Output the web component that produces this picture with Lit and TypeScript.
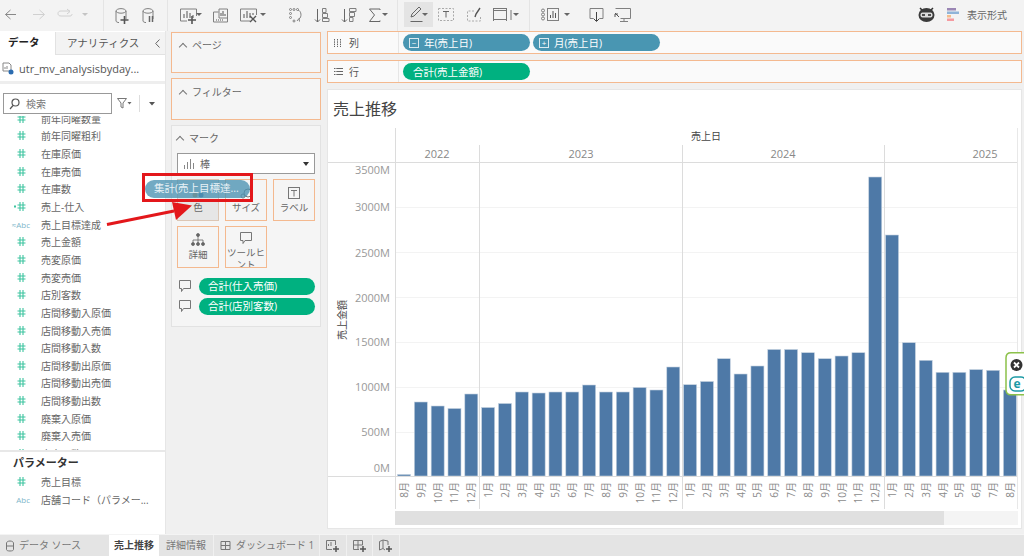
import { LitElement, html, css, svg } from 'lit'
import { customElement } from 'lit/decorators.js'

// top of each bar in page pixels, read off the reference
const BAR_TOPS = [
    474.5, 402, 406, 408.5, 394,
    407.5, 403.5, 392, 393, 392, 392, 385, 392, 392, 387.5, 390, 367,
    384.7, 381.5, 358.7, 374, 366, 349.5, 349.5, 352.7, 358.7, 356, 352.7, 177,
    235, 342.7, 360.3, 372.3, 372.3, 369.6, 370.3, 390,
]
const MONTHS = [8, 9, 10, 11, 12, 1, 2, 3, 4, 5, 6, 7, 8, 9, 10, 11, 12, 1, 2, 3, 4, 5, 6, 7, 8, 9, 10, 11, 12, 1, 2, 3, 4, 5, 6, 7, 8]
const TICKS: [string, number, number][] = [
    ['3500M', 170, 0], ['3000M', 207, 207], ['2500M', 253, 252], ['2000M', 298, 297],
    ['1500M', 342, 342], ['1000M', 387, 387], ['500M', 432, 432], ['0M', 468, 0],
]
const YEARS: [string, number][] = [['2022', 437], ['2023', 581], ['2024', 783], ['2025', 985]]

const FIELDS: [string, string][] = [
    ['前年同曜数量', 'n'], ['前年同曜粗利', 'n'], ['在庫原価', 'n'], ['在庫売価', 'n'], ['在庫数', 'n'],
    ['売上-仕入', 'cn'], ['売上目標達成', 'ca'], ['売上金額', 'n'], ['売変原価', 'n'], ['売変売価', 'n'],
    ['店別客数', 'n'], ['店間移動入原価', 'n'], ['店間移動入売価', 'n'], ['店間移動入数', 'n'],
    ['店間移動出原価', 'n'], ['店間移動出売価', 'n'], ['店間移動出数', 'n'], ['廃棄入原価', 'n'],
    ['廃棄入売価', 'n'], ['廃棄入数', 'n'],
]

// toolbar slots are drawn in page coordinates, the viewBox picks the slice
const slot = (x0: number, x1: number, body: unknown) => html`
    <svg class="slot" width=${x1 - x0} height="31" viewBox="${x0} 0 ${x1 - x0} 31"
        fill="none" stroke="#808080" stroke-width="1">${body}</svg>`
const caret = (x: number, y = 14, c = '#666') => svg`<path d="M${x} ${y}h6l-3 3z" fill=${c} stroke="none"/>`
const plus = (x: number, y: number) => svg`<path d="M${x - 4} ${y}h8M${x} ${y - 4}v8" stroke="#555" stroke-width="1.6"/>`
const can = (x: number) => svg`<path d="M${x + 10} 19V11c0-1.2-2.3-2.4-5-2.4S${x} 9.800 ${x} 11v10c0 .8 1.500 1.500 3 1.600M${x} 11c0 1.200 2.300 2.200 5 2.200s5-1 5-2.200"/>`

const bubble = (x: number, y: number, c = '#777') => svg`<path d="M${x + .5} ${y + .5}h11v8h-7l-2 3v-3h-2z" stroke=${c} fill="none"/>`

@customElement('sales-chart')
export class SalesChart extends LitElement {
    static styles = css`
        :host { display: block; height: 100%; }
        svg { display: block; width: 100%; height: 100%; font-family: "Open Sans", "Noto Sans CJK JP", sans-serif; }
    `

    protected override render() {
        return html`
            <svg viewBox="328 90 693 438">
                ${TICKS.filter(t => t[2]).map(t => svg`<line x1="395" x2="1017" y1=${t[2] + .5} y2=${t[2] + .5} stroke="#f3f3f3"/>`)}
                ${BAR_TOPS.map((top, i) => svg`
                    <rect x=${397.5 + i * 16.83} y=${top} width="13" height=${476 - top} fill="#4e79a7" stroke="#c5d2e0" stroke-width=".6"/>
                    <text transform="translate(${408 + i * 16.83} 482) rotate(-90)" text-anchor="end" font-size="10" fill="#8b8b8b">${MONTHS[i]}月</text>`)}
                <path d="M395.500 128V509M479.500 145V509M682.500 145V509M884.500 145V509" stroke="#dcdcdc"/>
                <path d="M1017.500 128V509" stroke="#e8e8e8"/>
                <path d="M328 162.500H1017M328 476.500H1017" stroke="#dcdcdc"/>
                <text x="706" y="140" text-anchor="middle" font-size="10" fill="#444">売上日</text>
                ${YEARS.map(y => svg`<text x=${y[1]} y="158" text-anchor="middle" font-size="11" fill="#888">${y[0]}</text>`)}
                ${TICKS.map(t => svg`<text x="390" y=${t[1] + 4} text-anchor="end" font-size="11" fill="#999">${t[0]}</text>`)}
                <text transform="translate(346 320) rotate(-90)" text-anchor="middle" font-size="10" fill="#444">売上金額</text>
                <rect x="395" y="511" width="623" height="14" fill="#f4f4f4"/>
                <rect x="395" y="511" width="549" height="14" fill="#e0e0e0"/>
            </svg>
        `
    }
}

@customElement('app-root')
export class AppRoot extends LitElement {
    static styles = css`
        :host {
            display: block;
            position: relative;
            width: 1024px;
            height: 556px;
            overflow: hidden;
            background: #f0f0f0;
            color: #555;
            font-family: "Open Sans", "Noto Sans CJK JP", sans-serif;
            font-size: 10px;
        }
        .page { display: flex; flex-direction: column; height: 100%; }

        .toolbar { display: flex; height: 31px; flex: none; background: #f3f3f3; }
        .slot { display: block; flex: none; }
        .view-as { flex: none; line-height: 30px; font-size: 10px; color: #666; margin-left: 6px; }

        .main { display: flex; flex: 1; min-height: 0; }

        .data { width: 165px; flex: none; background: #fff; display: flex; flex-direction: column; border-right: 1px solid #e6e6e6; }
        .tabs { display: flex; height: 23px; flex: none; margin-top: 1px; font-size: 10.500px; line-height: 21px; }
        .tab-on { width: 55px; padding-left: 8px; box-sizing: border-box; font-weight: 700; color: #222; background: #fff; }
        .tab-off { flex: 1; padding: 0 5px 0 11px; color: #555; background: #f3f3f3; border-left: 1px solid #e2e2e2; border-bottom: 1px solid #e2e2e2; display: flex; justify-content: space-between; align-items: center; }
        .source { display: flex; align-items: center; gap: 5px; height: 26px; flex: none; padding-left: 2px; font-size: 11px; color: #555; border-bottom: 3px solid #eee; }
        .search-row { display: flex; align-items: center; height: 21px; flex: none; margin-top: 9px; padding-left: 3px; }
        .search { display: flex; align-items: center; gap: 6px; width: 109px; height: 21px; box-sizing: border-box; padding-left: 5px; border: 1.500px solid #999; color: #777; }
        .fields { height: 334px; flex: none; overflow: hidden; margin-top: 2px; border-bottom: 2px solid #e8e8e8; }
        .fields-inner { margin-top: -6.500px; }
        .field { display: flex; align-items: center; height: 17.650px; color: #666; font-size: 10px; white-space: nowrap; }
        .kind { display: flex; align-items: center; justify-content: flex-end; width: 41px; flex: none; padding-right: 15px; box-sizing: border-box; }
        .kind.abc { font-size: 8px; color: #7db6ca; padding-right: 11px; }
        .params-title { font-weight: 700; font-size: 11px; color: #333; padding: 3px 0 2px 13px; line-height: 16px; }

        .cards { width: 150px; flex: none; margin-left: 5px; padding-top: 1px; display: flex; flex-direction: column; gap: 5px; }
        .card { box-sizing: border-box; border: 1.500px solid #f4b98f; background: #f5f5f5; padding: 5px 8px; font-size: 10px; color: #666; }
        .card.h41 { height: 41px; }
        .card.h42 { height: 42px; padding-top: 6px; }
        .head { display: flex; align-items: center; gap: 6px; line-height: 14px; }
        .head i { display: block; width: 5px; height: 5px; margin-top: 3px; border-left: 1px solid #777; border-top: 1px solid #777; transform: rotate(45deg); }
        .marks { height: 202px; border: 1px solid #e2e2e2; padding: 5px 5px; }
        .select { display: flex; align-items: center; gap: 5px; height: 19px; margin-top: 8px; padding: 0 5px; border: 1px solid #999; background: #fff; }
        .select b { margin-left: auto; width: 0; height: 0; border: 3.500px solid transparent; border-top: 4.500px solid #333; border-bottom: 0; }
        .btns { display: grid; grid-template-columns: repeat(3, 42px); grid-auto-rows: 42px; gap: 5px 6px; margin-top: 5px; }
        .btn { box-sizing: border-box; border: 1px solid #f4b98f; background: #f5f5f5; display: flex; flex-direction: column; align-items: center; overflow: hidden; padding-top: 6px; text-align: center; line-height: 12px; font-size: 9.500px; color: #666; }
        .btn svg { flex: none; margin-bottom: 2px; }
        .btn.on { background: #e6e6e6; border-color: #dcc6b4; }
        .btn.hint { padding-top: 4px; }
        .pill-row { display: flex; align-items: center; gap: 7px; padding-left: 2px; height: 17px; }
        .pill-rows { margin-top: 10px; display: flex; flex-direction: column; gap: 3px; }
        .pill { box-sizing: border-box; height: 17px; border-radius: 9px; color: #fff; font-size: 10.500px; line-height: 16px; padding-left: 9px; white-space: nowrap; }
        .green { background: #00b180; }
        .blue { background: #4996b2; }
        .pill-row .pill { flex: 1; }

        .right { flex: 1; margin: 0 2px 0 6px; display: flex; flex-direction: column; min-width: 0; }
        .shelf { display: flex; align-items: center; height: 23px; flex: none; box-sizing: border-box; border: 1.500px solid #f4b98f; background: #fafafa; }
        .shelf + .shelf { margin-top: 6px; }
        .shelf-label { display: flex; align-items: center; gap: 5px; width: 71px; height: 100%; flex: none; box-sizing: border-box; padding-left: 5px; border-right: 1px solid #e6e6e6; }
        .shelf-pills { display: flex; gap: 3px; padding-left: 4px; }
        .shelf .pill { width: 127px; display: flex; align-items: center; gap: 5px; padding-left: 6px; }
        .shelf .pill.green { padding-left: 10px; }
        .box { display: block; width: 8px; height: 8px; border: 1px solid #dceaf0; text-align: center; line-height: 7px; font-size: 8px; }
        .sheet { flex: 1; min-height: 0; margin: 6px 0 5px; background: #fff; border: 1px solid #e6e6e6; position: relative; display: flex; flex-direction: column; }
        .sheet h1 { margin: 0; flex: none; height: 38px; font-weight: 400; font-size: 16px; line-height: 38px; padding-left: 5px; color: #444; }
        .plot { position: absolute; inset: 0; }
        .title { position: relative; }

        .sheets { display: flex; height: 22px; flex: none; background: #e4e4e4; border-top: 1px solid #f4f4f4; box-sizing: border-box; align-items: stretch; line-height: 21px; font-size: 10px; color: #777; }
        .sheets > div { display: flex; align-items: center; white-space: nowrap; }
        .s-src { width: 109px; padding-left: 5px; gap: 4px; box-sizing: border-box; }
        .s-cur { width: 50px; justify-content: center; background: #fff; font-weight: 700; color: #444; }
        .s-info { width: 55px; padding-left: 7px; box-sizing: border-box; border-right: 1px solid #f0f0f0; }
        .s-dash { width: 106px; padding-left: 6px; gap: 5px; box-sizing: border-box; border-right: 1px solid #f0f0f0; }
        .s-add { width: 26.500px; justify-content: center; box-sizing: border-box; border-right: 1px solid #f0f0f0; }

        .drag { position: absolute; left: 145px; top: 180px; width: 105px; height: 18px; box-sizing: border-box; border-radius: 9px; padding-left: 9px; background: rgba(74, 146, 178, .78); color: #e8f2f6; font-size: 10.500px; line-height: 17px; white-space: nowrap; }
        .red-box { position: absolute; left: 142px; top: 173px; width: 111px; height: 29px; box-sizing: border-box; border: 3px solid #e3171b; }
        .arrow { position: absolute; left: 100px; top: 196px; }
        .eset { position: absolute; left: 1005px; top: 352px; width: 19px; height: 44px; }
    `

    private _toolbar() {
        return html`
            <div class="toolbar">
                ${slot(0, 24, svg`<path d="M5.500 14.500H16M10.500 10L5.500 14.500L10.500 19" stroke="#888"/>`)}
                ${slot(24, 52, svg`<path d="M33 14.500H44M39.500 10L44.500 14.500L39.500 19" stroke="#d0d0d0"/>`)}
                ${slot(52, 103, svg`<path d="M70 11h-9c-2 0-3 1-3 2.500S59 16 61 16h9c1.500 0 2-1 2-2M67 9l3 2.500-3 2.500" stroke="#d0d0d0"/>${caret(82, 13, '#c4c4c4')}`)}
                ${slot(103, 135, svg`<path d="M103.500 0V31" stroke="#e4e4e4"/>${can(116)}${plus(124.500, 20)}`)}
                ${slot(135, 167, svg`${can(143)}<path d="M149.500 16v6M152.500 16v6" stroke="#666" stroke-width="1.500"/>`)}
                ${slot(167, 205, svg`<path d="M167.500 0V31" stroke="#e4e4e4"/><path d="M187 21h-6.500V9h16v7"/><path d="M184 18v-4M187 18v-7M190 18v-5M193 18v-3" stroke="#555"/>${plus(192, 20)}${caret(196, 13)}`)}
                ${slot(205, 235, svg`<path d="M219 9h8.500v9H219zM213.500 12h5M213.500 12v10h14v-4"/><path d="M221 16v-3M223 16v-5M225 16v-2" stroke="#555"/><path d="M216 20h8" stroke="#555" stroke-dasharray="1 1"/>`)}
                ${slot(235, 275, svg`<path d="M250 21h-9.500V9h16v6"/><path d="M244 18v-4M247 18v-7M250 18v-5M253 15v-2" stroke="#555"/><path d="M250 16l6 6M256 16l-6 6" stroke="#555" stroke-width="1.400"/>${caret(260, 13)}<path d="M275.500 0V31" stroke="#e4e4e4"/>`)}
                ${slot(275, 310, svg`<circle cx="290.500" cy="9.500" r="1"/><circle cx="294" cy="9.500" r="1"/><circle cx="297.500" cy="9.500" r="1"/><circle cx="290.500" cy="13.500" r="1"/><circle cx="290.500" cy="17.500" r="1"/><circle cx="294" cy="21" r="1"/><path d="M298 10c3.500 1 4 7 1 9M297 21l2-2.500 .5 3"/>`)}
                ${slot(310, 337, svg`<path d="M317.500 9v13M315 19.500l2.500 2.500 2.500-2.500" stroke="#666"/><path d="M322.500 8.500h3.500v4h-3.500zM322.500 13.500h5v4h-5zM322.500 18.500h6.500v3h-6.500z"/>`)}
                ${slot(337, 364, svg`<path d="M344.500 9v13M342 19.500l2.500 2.500 2.500-2.500" stroke="#666"/><path d="M349.500 8.500h6.500v3h-6.500zM349.500 12.500h5v4h-5zM349.500 17.500h3.500v4h-3.500z"/>`)}
                ${slot(364, 398, svg`<path d="M380 10V9h-10.500l5 6-5 6.500H380v-1" stroke="#666"/>${caret(382, 13)}<path d="M397.500 0V31" stroke="#e4e4e4"/>`)}
                ${slot(398, 433, svg`<rect x="404" y="2" width="29" height="25" fill="#e4e4e4" stroke="none"/><path d="M411 17l1-3 7-7 2 2-7 7zM410.500 21.500h12" stroke="#666"/>${caret(422, 13)}`)}
                ${slot(433, 460, svg`<rect x="438.500" y="8.500" width="15" height="12" stroke="#aaa" stroke-dasharray="2 1.500"/><path d="M443 11.500h6M446 11.500v6" stroke="#666"/>`)}
                ${slot(460, 488, svg`<path d="M474 11h-6.500v10h13v-5" stroke="#aaa" stroke-dasharray="2 1.500"/><path d="M475 17l1-3 4-6" stroke="#555" stroke-width="1.400"/>`)}
                ${slot(488, 529, svg`<path d="M493 10.500h14M493 19.500h14M493.500 8v13M506.500 8v13M511 10v10" stroke="#777"/><path d="M493 8.500h14" stroke="#777"/>${caret(513, 13)}`)}
                ${slot(529, 577, svg`<path d="M529.500 0V31" stroke="#e4e4e4"/><circle cx="543" cy="10.500" r="1.500"/><circle cx="543" cy="14.500" r="1.500"/><circle cx="543" cy="18.500" r="1.500"/><rect x="547.500" y="8.500" width="11" height="12"/><path d="M550.500 18v-3M553 18v-7M555.500 18v-5" stroke="#555"/>${caret(564, 13)}<path d="M577.500 0V31" stroke="#e4e4e4"/>`)}
                ${slot(577, 610, svg`<path d="M593 18.500h-3v-10h13v10h-3"/><path d="M596.500 12v9M593.500 18.500l3 3 3-3" stroke="#444"/>`)}
                ${slot(610, 918, svg`<path d="M615.500 8.500h15v10h-10M624 18.500v3M620 21.500h8" /><path d="M615 13l4 4M615 17v-3h3" stroke="#555"/>`)}
                ${slot(918, 946, svg`
                    <path d="M920 8l3 3M933 8l-3 3" stroke="#333" stroke-width="1.500"/>
                    <ellipse cx="926.500" cy="15" rx="8" ry="7" fill="#3b3b3b" stroke="none"/>
                    <rect x="920.500" y="12.500" width="12" height="5" rx="2" fill="#ddd" stroke="none"/>
                    <path d="M922 15h3M928 15h3" stroke="#222" stroke-width="1.500"/>`)}
                ${slot(946, 961, svg`
                    <rect x="947" y="8" width="9" height="2.500" fill="#9a86b4" stroke="none"/>
                    <rect x="947" y="11.500" width="12" height="2.500" fill="#8fb4d8" stroke="none"/>
                    <rect x="947" y="15" width="4" height="2.500" fill="#f3bd8c" stroke="none"/>
                    <rect x="947" y="18.500" width="7" height="2.500" fill="#f59aa0" stroke="none"/>`)}
                <div class="view-as">表示形式</div>
            </div>
        `
    }

    private _field(name: string, kind: string) {
        const hash = html`<svg width="12" height="9" viewBox="0 0 12 9" stroke="#3cc49f" stroke-width="1.100"><path d="M6 0v9M9 0v9M3.500 3h8M3.500 6h8"/>${kind === 'cn' ? svg`<rect x="0" y="3.500" width="2" height="2" fill="#3cc49f" stroke="none"/>` : ''}</svg>`
        const abc = kind === 'ca' ? '≈Abc' : 'Abc'
        return html`
            <div class="field">
                <span class="kind ${kind === 'ca' || kind === 'a' ? 'abc' : ''}">${kind === 'n' || kind === 'cn' ? hash : abc}</span>
                <span>${name}</span>
            </div>
        `
    }

    private _data() {
        return html`
            <section class="data">
                <div class="tabs">
                    <div class="tab-on">データ</div>
                    <div class="tab-off">
                        <span>アナリティクス</span>
                        <svg width="5" height="9" viewBox="0 0 5 9" fill="none" stroke="#666"><path d="M4.500 .5L.7 4.500l3.800 4"/></svg>
                    </div>
                </div>
                <div class="source">
                    <svg width="12" height="13" viewBox="0 0 12 13" fill="none">
                        <path d="M1 1h6l2 2v6H1z" stroke="#888"/>
                        <path d="M3 7V5M5 7V4" stroke="#888"/>
                        <circle cx="9" cy="10" r="2.500" fill="#2b6cb0"/>
                    </svg>
                    <span>utr_mv_analysisbyday...</span>
                </div>
                <div class="search-row">
                    <div class="search">
                        <svg width="11" height="12" viewBox="0 0 11 12" fill="none" stroke="#555" stroke-width="1.200">
                            <circle cx="6.500" cy="4.500" r="3.500"/><path d="M4 7.500L1 11"/>
                        </svg>
                        <span>検索</span>
                    </div>
                    <svg width="52" height="21" viewBox="112 92 52 21" fill="none" stroke="#777">
                        <path d="M117.500 97.500h9l-3.500 4.500v5l-2-1v-4z"/>
                        <path d="M127.500 101h4l-2 2.500z" fill="#666" stroke="none"/>
                        <path d="M139.500 94v17" stroke="#ddd"/>
                        <path d="M149 101h6l-3 3.500z" fill="#555" stroke="none"/>
                    </svg>
                </div>
                <div class="fields">
                    <div class="fields-inner">${FIELDS.map(f => this._field(f[0], f[1]))}</div>
                </div>
                <div class="params-title">パラメーター</div>
                ${this._field('売上目標', 'n')}
                ${this._field('店舗コード（パラメー...', 'a')}
            </section>
        `
    }

    private _cards() {
        return html`
            <section class="cards">
                <div class="card h41"><div class="head"><i></i>ページ</div></div>
                <div class="card h42"><div class="head"><i></i>フィルター</div></div>
                <div class="card marks">
                    <div class="head"><i></i>マーク</div>
                    <div class="select">
                        <svg width="12" height="10" viewBox="0 0 12 10" stroke="#888"><path d="M1.500 10V6M4.500 10V3M7.500 10V0M10.500 10V4"/></svg>
                        <span>棒</span><b></b>
                    </div>
                    <div class="btns">
                        <div class="btn on">
                            <svg width="14" height="14" viewBox="0 0 14 14"><circle cx="4" cy="9" r="2.500" fill="#d98f4e"/><circle cx="10" cy="9" r="2.500" fill="#4e79a7"/></svg>
                            色
                        </div>
                        <div class="btn">
                            <svg width="14" height="14" viewBox="0 0 14 14" fill="none" stroke="#777"><circle cx="4" cy="10" r="2"/><circle cx="9" cy="7" r="4"/></svg>
                            サイズ
                        </div>
                        <div class="btn">
                            <svg width="14" height="14" viewBox="0 0 14 14" fill="none" stroke="#777"><rect x="1.500" y="1.500" width="11" height="11"/><path d="M4 4.500h6M7 4.500v6"/></svg>
                            ラベル
                        </div>
                        <div class="btn">
                            <svg width="14" height="14" viewBox="0 0 14 14" fill="#666" stroke="#666" stroke-width=".8">
                                <circle cx="7" cy="2" r="1.500"/><circle cx="2" cy="11" r="1.500"/><circle cx="7" cy="11" r="1.500"/><circle cx="12" cy="11" r="1.500"/>
                                <path d="M7 3v7M2 9.500V7h10v2.500" fill="none"/>
                            </svg>
                            詳細
                        </div>
                        <div class="btn hint">
                            <svg width="14" height="14" viewBox="0 0 14 14" fill="none" stroke="#777"><path d="M1.500 1.500h11v8H6l-2 3v-3H1.500z"/></svg>
                            ツールヒント
                        </div>
                    </div>
                    <div class="pill-rows">
                        <div class="pill-row">
                            <svg width="13" height="13" viewBox="0 0 13 13">${bubble(0, 0)}</svg>
                            <div class="pill green">合計(仕入売価)</div>
                        </div>
                        <div class="pill-row">
                            <svg width="13" height="13" viewBox="0 0 13 13">${bubble(0, 0)}</svg>
                            <div class="pill green">合計(店別客数)</div>
                        </div>
                    </div>
                </div>
            </section>
        `
    }

    private _right() {
        return html`
            <section class="right">
                <div class="shelf">
                    <div class="shelf-label">
                        <svg width="11" height="9" viewBox="0 0 11 9" stroke="#666"><path d="M1.500 1v8M4.500 1v8M7.500 1v8" stroke-dasharray="1.500 .8"/></svg>
                        <span>列</span>
                    </div>
                    <div class="shelf-pills">
                        <div class="pill blue"><span class="box">−</span>年(売上日)</div>
                        <div class="pill blue"><span class="box">+</span>月(売上日)</div>
                    </div>
                </div>
                <div class="shelf">
                    <div class="shelf-label">
                        <svg width="11" height="9" viewBox="0 0 11 9" stroke="#666"><path d="M1 1.500h9M1 4.500h9M1 7.500h9" stroke-dasharray="1.500 .8 7"/></svg>
                        <span>行</span>
                    </div>
                    <div class="shelf-pills"><div class="pill green">合計(売上金額)</div></div>
                </div>
                <div class="sheet">
                    <div class="plot"><sales-chart></sales-chart></div>
                    <h1 class="title">売上推移</h1>
                </div>
            </section>
        `
    }

    private _sheets() {
        return html`
            <div class="sheets">
                <div class="s-src">
                    <svg width="10" height="12" viewBox="0 0 10 12" fill="none" stroke="#777"><path d="M1.500 3c0-1 1.500-2 3.500-2s3.500 1 3.500 2v6.500c0 1-1.500 1.500-3.500 1.500s-3.500-.5-3.500-1.500zM1.500 6h7"/></svg>
                    データ ソース
                </div>
                <div class="s-cur">売上推移</div>
                <div class="s-info">詳細情報</div>
                <div class="s-dash">
                    <svg width="11" height="11" viewBox="0 0 11 11" fill="none" stroke="#777"><path d="M1 1.500h9v8H1zM1 5.500h9M5.500 1.500v8"/></svg>
                    ダッシュボード 1
                </div>
                <div class="s-add">
                    <svg width="15" height="14" viewBox="0 0 15 14" fill="none" stroke="#777"><path d="M7 10.500H1.500v-9h9V6M3.500 7V5M6 7V3"/><path d="M11 7v6M8 10h6" stroke="#555" stroke-width="1.500"/></svg>
                </div>
                <div class="s-add">
                    <svg width="15" height="14" viewBox="0 0 15 14" fill="none" stroke="#777"><path d="M7 10.500H1.500v-9h9V6M1.500 6h9M6 1.500V10"/><path d="M11 7v6M8 10h6" stroke="#555" stroke-width="1.500"/></svg>
                </div>
                <div class="s-add">
                    <svg width="15" height="14" viewBox="0 0 15 14" fill="none" stroke="#777"><path d="M7 11L5 9.500 1.500 11V2.500L5 1l5 1v4M5 1v8.500"/><path d="M11 7v6M8 10h6" stroke="#555" stroke-width="1.500"/></svg>
                </div>
            </div>
        `
    }

    protected override render() {
        return html`
            <div class="page">
                ${this._toolbar()}
                <div class="main">
                    ${this._data()}
                    ${this._cards()}
                    ${this._right()}
                </div>
                ${this._sheets()}
            </div>

            <div class="drag">集計(売上目標達...</div>
            <div class="red-box"></div>
            <svg class="arrow" width="95" height="34" viewBox="100 196 95 34">
                <path d="M107 224.500L174 211" stroke="#e3171b" stroke-width="3" fill="none"/>
                <path d="M172 202L192 205.500L176 220z" fill="#e3171b"/>
            </svg>
            <svg class="eset" viewBox="1005 352 19 44">
                <path d="M1024 352.800h-13c-3 0-5 2-5 5v32c0 3 2 5 5 5h13" fill="#fff" stroke="#8cc14a" stroke-width="1.500"/>
                <circle cx="1016.500" cy="365" r="6" fill="#333"/>
                <path d="M1014 362.500l5 5M1019 362.500l-5 5" stroke="#fff" stroke-width="1.800"/>
                <rect x="1010" y="377" width="16" height="14" rx="5" fill="#fff" stroke="#1d9aa5" stroke-width="1.500"/>
                <text x="1017" y="388" text-anchor="middle" font-size="12" font-weight="700" fill="#1d9aa5">e</text>
            </svg>
        `
    }
}

declare global {
    interface HTMLElementTagNameMap {
        'app-root': AppRoot
        'sales-chart': SalesChart
    }
}
